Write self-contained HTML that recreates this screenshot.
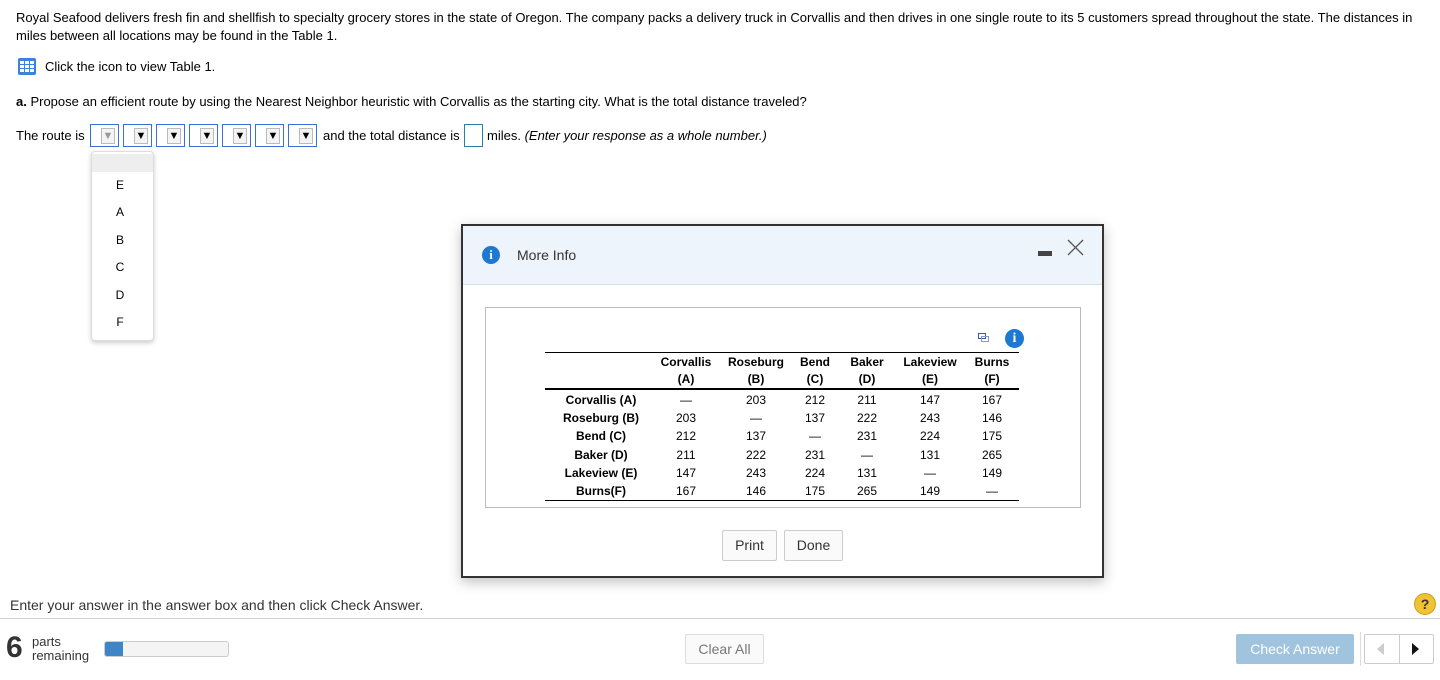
<!DOCTYPE html>
<html><head><meta charset="utf-8"><style>
*{margin:0;padding:0;box-sizing:border-box}
body{width:1440px;height:680px;position:relative;background:#fff;font-family:"Liberation Sans",Arial,sans-serif;color:#000;overflow:hidden}
.a{position:absolute;white-space:nowrap}
.t{font-size:13px}
.dd{position:absolute;top:124px;width:29px;height:23px;border:1px solid #3a6fd8;background:#fff}
.dd i{position:absolute;right:3px;top:3px;width:14px;height:16px;border:1px solid #bbb;background:#f4f4f4;font-style:normal;font-size:11px;text-align:center;line-height:15px}
.c{position:absolute;width:80px;text-align:center;font-size:12px}
.b{font-weight:bold}
</style></head><body>
<div class="a t" style="left:16px;top:9px;line-height:18px;white-space:normal;width:1410px">Royal Seafood delivers fresh fin and shellfish to specialty grocery stores in the state of Oregon. The company packs a delivery truck in Corvallis and then drives in one single route to its 5 customers spread throughout the state. The distances in miles between all locations may be found in the Table 1.</div>
<svg class="a" style="left:18px;top:58px" width="18" height="17" viewBox="0 0 18 17"><rect x="0" y="0" width="18" height="17" rx="2" fill="#3b82e0"/><g fill="#fff"><rect x="2" y="3" width="4" height="3"/><rect x="7" y="3" width="4" height="3"/><rect x="12" y="3" width="4" height="3"/><rect x="2" y="7" width="4" height="3"/><rect x="7" y="7" width="4" height="3"/><rect x="12" y="7" width="4" height="3"/><rect x="2" y="11" width="4" height="3"/><rect x="7" y="11" width="4" height="3"/><rect x="12" y="11" width="4" height="3"/></g></svg>
<div class="a t" style="left:45px;top:59px">Click the icon to view Table 1.</div>
<div class="a t" style="left:16px;top:94px"><b>a.</b> Propose an efficient route by using the Nearest Neighbor heuristic with Corvallis as the starting city. What is the total distance traveled?</div>
<div class="a t" style="left:16px;top:128px">The route is</div>
<div class="dd" style="left:90px"><i style="color:#999">▼</i></div>
<div class="dd" style="left:123px"><i>▼</i></div>
<div class="dd" style="left:156px"><i>▼</i></div>
<div class="dd" style="left:189px"><i>▼</i></div>
<div class="dd" style="left:222px"><i>▼</i></div>
<div class="dd" style="left:255px"><i>▼</i></div>
<div class="dd" style="left:288px"><i>▼</i></div>
<div class="a t" style="left:323px;top:128px">and the total distance is</div>
<div class="a" style="left:464px;top:124px;width:19px;height:23px;border:1px solid #2a7fa8"></div>
<div class="a t" style="left:487px;top:128px">miles. <i>(Enter your response as a whole number.)</i></div>
<div class="a" style="left:91px;top:151px;width:63px;height:190px;border:1px solid #ddd;border-radius:4px;background:#fff;box-shadow:0 2px 5px rgba(0,0,0,.2)">
<div style="margin-top:2px;height:18px;background:#eee"></div></div>
<div class="a" style="left:114px;top:172px;font-size:12px;line-height:27.4px;text-align:center;width:12px">E<br>A<br>B<br>C<br>D<br>F</div>

<div class="a" style="left:461px;top:224px;width:643px;height:354px;border:2px solid #333;background:#fff;box-shadow:0 4px 12px rgba(0,0,0,.25)">
<div style="height:59px;background:#eef4fc;border-bottom:1px solid #cfdff0"></div></div>
<div class="a" style="left:482px;top:246px;width:18px;height:18px;border-radius:50%;background:#1d78d2;color:#fff;font:bold 13px 'Liberation Serif',serif;text-align:center;line-height:18px">i</div>
<div class="a" style="left:517px;top:247px;font-size:14px;color:#333">More Info</div>
<div class="a" style="left:1038px;top:251px;width:14px;height:5px;background:#444"></div>
<svg class="a" style="left:1067px;top:239px" width="17" height="17"><path d="M1 1L16 16M16 1L1 16" stroke="#555" stroke-width="1.3"/></svg>
<div class="a" style="left:485px;top:307px;width:596px;height:201px;border:1px solid #bbb"></div>
<svg class="a" style="left:978px;top:333px" width="12" height="10"><rect x="0.5" y="0.5" width="7" height="5" fill="none" stroke="#4050b0"/><rect x="3.5" y="3.5" width="7" height="5" fill="none" stroke="#8899cc"/></svg>
<div class="a" style="left:1005px;top:329px;width:19px;height:19px;border-radius:50%;background:#1d78d2;color:#fff;font:bold 14px 'Liberation Serif',serif;text-align:center;line-height:19px">i</div>
<div class="a" style="left:545px;top:352px;width:474px;border-top:1px solid #000"></div>
<div class="a" style="left:545px;top:388px;width:474px;border-top:2px solid #000"></div>
<div class="a" style="left:545px;top:500px;width:474px;border-top:1px solid #000"></div>
<div class="c b" style="left:646px;top:354px;line-height:17px">Corvallis<br>(A)</div>
<div class="c b" style="left:716px;top:354px;line-height:17px">Roseburg<br>(B)</div>
<div class="c b" style="left:775px;top:354px;line-height:17px">Bend<br>(C)</div>
<div class="c b" style="left:827px;top:354px;line-height:17px">Baker<br>(D)</div>
<div class="c b" style="left:890px;top:354px;line-height:17px">Lakeview<br>(E)</div>
<div class="c b" style="left:952px;top:354px;line-height:17px">Burns<br>(F)</div>
<div class="c b" style="left:561px;top:391px;line-height:18.2px">Corvallis (A)<br>Roseburg (B)<br>Bend (C)<br>Baker (D)<br>Lakeview (E)<br>Burns(F)</div>
<div class="c" style="left:646px;top:391px;line-height:18.2px">—<br>203<br>212<br>211<br>147<br>167</div>
<div class="c" style="left:716px;top:391px;line-height:18.2px">203<br>—<br>137<br>222<br>243<br>146</div>
<div class="c" style="left:775px;top:391px;line-height:18.2px">212<br>137<br>—<br>231<br>224<br>175</div>
<div class="c" style="left:827px;top:391px;line-height:18.2px">211<br>222<br>231<br>—<br>131<br>265</div>
<div class="c" style="left:890px;top:391px;line-height:18.2px">147<br>243<br>224<br>131<br>—<br>149</div>
<div class="c" style="left:952px;top:391px;line-height:18.2px">167<br>146<br>175<br>265<br>149<br>—</div>
<div class="a" style="left:722px;top:530px;width:55px;height:31px;border:1px solid #ccc;border-radius:2px;background:#fafafa;font-size:14px;color:#333;text-align:center;line-height:29px">Print</div>
<div class="a" style="left:784px;top:530px;width:59px;height:31px;border:1px solid #ccc;border-radius:2px;background:#fafafa;font-size:14px;color:#333;text-align:center;line-height:29px">Done</div>

<div class="a" style="left:10px;top:597px;font-size:14px;color:#333">Enter your answer in the answer box and then click Check Answer.</div>
<div class="a" style="left:1414px;top:593px;width:22px;height:22px;border-radius:50%;background:#f1c232;border:1px solid #c9a020;font:bold 14px 'Liberation Sans';text-align:center;line-height:20px;color:#333">?</div>
<div class="a" style="left:0;top:618px;width:1440px;border-top:1px solid #ccd0dc"></div>
<div class="a" style="left:6px;top:633px;font:bold 30px 'Liberation Sans';color:#333;line-height:30px">6</div>
<div class="a" style="left:32px;top:635px;font-size:13px;color:#333;line-height:14px">parts<br>remaining</div>
<div class="a" style="left:104px;top:641px;width:125px;height:16px;border:1px solid #ccc;border-radius:3px;background:#f4f4f4;overflow:hidden"><div style="width:18px;height:100%;background:#3d85c6"></div></div>
<div class="a" style="left:685px;top:634px;width:79px;height:30px;border:1px solid #ddd;border-radius:2px;background:#fafafa;font-size:14px;color:#777;text-align:center;line-height:28px">Clear All</div>
<div class="a" style="left:1236px;top:634px;width:118px;height:30px;border-radius:2px;background:#a0c3de;font-size:14px;color:#fff;text-align:center;line-height:30px">Check Answer</div>
<div class="a" style="left:1360px;top:632px;height:34px;border-left:1px solid #ddd"></div>
<div class="a" style="left:1364px;top:634px;width:70px;height:30px;border:1px solid #ccc;border-radius:2px;background:#fff"></div>
<div class="a" style="left:1399px;top:634px;height:30px;border-left:1px solid #ccc"></div>
<svg class="a" style="left:1377px;top:643px" width="8" height="12"><path d="M7 0L0 6L7 12Z" fill="#ccc"/></svg>
<svg class="a" style="left:1412px;top:643px" width="8" height="12"><path d="M0 0L7 6L0 12Z" fill="#111"/></svg>
</body></html>
